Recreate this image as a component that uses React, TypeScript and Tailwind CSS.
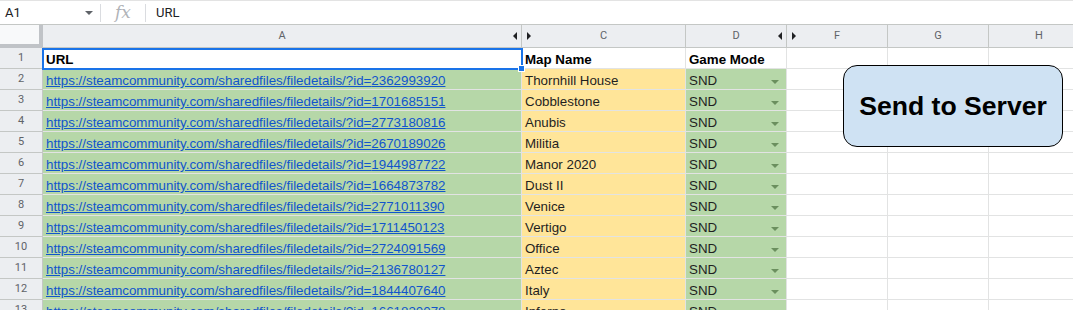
import React from "react";

type Row = { id: string; map: string };

const rows: Row[] = [
  { id: "2362993920", map: "Thornhill House" },
  { id: "1701685151", map: "Cobblestone" },
  { id: "2773180816", map: "Anubis" },
  { id: "2670189026", map: "Militia" },
  { id: "1944987722", map: "Manor 2020" },
  { id: "1664873782", map: "Dust II" },
  { id: "2771011390", map: "Venice" },
  { id: "1711450123", map: "Vertigo" },
  { id: "2724091569", map: "Office" },
  { id: "2136780127", map: "Aztec" },
  { id: "1844407640", map: "Italy" },
  { id: "1661830078", map: "Inferno" },
];

const cellText =
  "flex items-end pb-0 px-[3px] text-[13.33px] leading-[16px] whitespace-nowrap overflow-hidden";

function LeftTri() {
  return (
    <span className="absolute top-[7px] right-[4px] w-0 h-0 border-y-[4px] border-y-transparent border-r-[4px] border-r-[#202124]" />
  );
}
function RightTri() {
  return (
    <span className="absolute top-[7px] left-[5px] w-0 h-0 border-y-[4px] border-y-transparent border-l-[4px] border-l-[#202124]" />
  );
}

function Dropdown() {
  return (
    <span className="mb-[5px] w-0 h-0 border-x-[4px] border-x-transparent border-t-[4px] border-t-[#6b8f5e]" />
  );
}

export default function App() {
  return (
    <div className="relative w-[1073px] h-[310px] overflow-hidden bg-white font-['Liberation_Sans',Arial,sans-serif] text-[#000]">
      {/* Formula bar */}
      <div className="flex items-center h-[25px] border-t border-b border-t-[#e3e3e3] border-b-[#c4c7c5] font-['Roboto',sans-serif]">
        <div className="flex items-center justify-between shrink-0 w-[101px] h-[18px] pl-[5px] pr-[7px] border-r border-r-[#dadce0]">
          <span className="text-[13px] text-[#202124]">A1</span>
          <span className="w-0 h-0 border-x-[4px] border-x-transparent border-t-[4px] border-t-[#5f6368]" />
        </div>
        <div className="flex items-center justify-center shrink-0 w-[45px] h-[18px] border-r border-r-[#dadce0]">
          <span className="font-['DejaVu_Serif',serif] italic text-[17px] text-[#b0b3b8] leading-none">fx</span>
        </div>
        <span className="pl-[10px] text-[13px] text-[#202124]">URL</span>
      </div>

      {/* Grid */}
      <div className="flex flex-col w-[1090px]">
        {/* Column headers */}
        <div className="flex h-[23px] shrink-0 font-['Roboto',sans-serif] text-[11px] text-[#5f6368]">
          <div className="shrink-0 w-[43px] h-full bg-[#f8f9fa] border-r-[4px] border-b-[4px] border-[#c0c3c7]" />
          <div className="relative shrink-0 w-[479px] h-full bg-[#eceef1] border-r border-b border-[#c4c7c5] flex items-center justify-center">
            A
            <LeftTri />
          </div>
          <div className="relative shrink-0 w-[164px] h-full bg-[#eceef1] border-r border-b border-[#c4c7c5] flex items-center justify-center">
            C
            <RightTri />
          </div>
          <div className="relative shrink-0 w-[101px] h-full bg-[#eceef1] border-r border-b border-[#c4c7c5] flex items-center justify-center">
            D
            <LeftTri />
          </div>
          <div className="relative shrink-0 w-[101px] h-full bg-[#eceef1] border-r border-b border-[#c4c7c5] flex items-center justify-center">
            F
            <RightTri />
          </div>
          <div className="shrink-0 w-[101px] h-full bg-[#eceef1] border-r border-b border-[#c4c7c5] flex items-center justify-center">
            G
          </div>
          <div className="shrink-0 w-[101px] h-full bg-[#eceef1] border-r border-b border-[#c4c7c5] flex items-center justify-center">
            H
          </div>
        </div>

        {/* Row 1 */}
        <div className="flex h-[21px] shrink-0">
          <div className="shrink-0 w-[43px] h-full bg-[#eceef1] border-r border-b border-[#c4c7c5] flex items-center justify-center font-['Roboto',sans-serif] text-[11px] text-[#5f6368]">
            1
          </div>
          <div className={`shrink-0 w-[479px] h-full border-r border-b border-[#e2e3e3] font-bold ${cellText}`}>URL</div>
          <div className={`shrink-0 w-[164px] h-full border-r border-b border-[#e2e3e3] font-bold ${cellText}`}>Map Name</div>
          <div className={`shrink-0 w-[101px] h-full border-r border-b border-[#e2e3e3] font-bold ${cellText}`}>Game Mode</div>
          <div className="shrink-0 w-[101px] h-full border-r border-b border-[#e2e3e3]" />
          <div className="shrink-0 w-[101px] h-full border-r border-b border-[#e2e3e3]" />
          <div className="shrink-0 w-[101px] h-full border-r border-b border-[#e2e3e3]" />
        </div>

        {rows.map((r, i) => (
          <div key={r.id} className="flex h-[21px] shrink-0">
            <div className="shrink-0 w-[43px] h-full bg-[#eceef1] border-r border-b border-[#c4c7c5] flex items-center justify-center font-['Roboto',sans-serif] text-[11px] text-[#5f6368]">
              {i + 2}
            </div>
            <div className={`shrink-0 w-[479px] h-full bg-[#b6d7a8] border-r border-b border-[#e2e3e3] ${cellText}`}>
              <span className="text-[#1155cc] underline">
                https://steamcommunity.com/sharedfiles/filedetails/?id={r.id}
              </span>
            </div>
            <div className={`shrink-0 w-[164px] h-full bg-[#ffe599] border-r border-b border-[#e2e3e3] ${cellText} text-[#1f1f1f]`}>
              {r.map}
            </div>
            <div className={`shrink-0 w-[101px] h-full bg-[#b6d7a8] border-r border-b border-[#e2e3e3] ${cellText} justify-between pr-[7px] text-[#1f1f1f]`}>
              <span>SND</span>
              <Dropdown />
            </div>
            <div className="shrink-0 w-[101px] h-full border-r border-b border-[#e2e3e3]" />
            <div className="shrink-0 w-[101px] h-full border-r border-b border-[#e2e3e3]" />
            <div className="shrink-0 w-[101px] h-full border-r border-b border-[#e2e3e3]" />
          </div>
        ))}
      </div>

      {/* Selection of A1 */}
      <div className="absolute left-[42px] top-[48px] w-[481px] h-[22px] border-2 border-[#1a73e8] pointer-events-none" />
      <div className="absolute left-[518px] top-[65px] w-[7px] h-[7px] bg-[#1a73e8] border border-white" />

      {/* Drawing button */}
      <div className="absolute left-[843px] top-[65px] w-[220px] h-[82px] rounded-[14px] border border-black bg-[#cfe2f3] flex items-center justify-center">
        <span className="font-bold text-[26.6px] leading-none text-black">Send to Server</span>
      </div>
    </div>
  );
}
